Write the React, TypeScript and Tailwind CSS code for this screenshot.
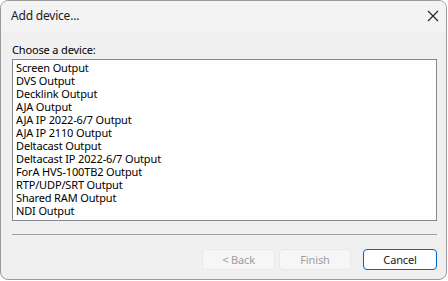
const devices = [
  "Screen Output",
  "DVS Output",
  "Decklink Output",
  "AJA Output",
  "AJA IP 2022-6/7 Output",
  "AJA IP 2110 Output",
  "Deltacast Output",
  "Deltacast IP 2022-6/7 Output",
  "ForA HVS-100TB2 Output",
  "RTP/UDP/SRT Output",
  "Shared RAM Output",
  "NDI Output",
];

export default function App() {
  return (
    <div className="w-[448px] h-[281px] bg-white font-['Noto_Sans',sans-serif] text-[11px] tracking-[-0.15px] text-black">
      <div className="w-[447px] h-[280px] rounded-[8px] border border-[#9a9a9a] bg-[#f0f0f0] overflow-hidden flex flex-col">
        {/* title bar */}
        <div className="h-[30px] bg-[#f3f3f3] flex items-center justify-between pl-[10px] pr-[7px]">
          <span className="text-[#1a1a1a] text-[12px] tracking-[-0.2px]">Add device...</span>
          <svg width="12" height="12" viewBox="0 0 12 12">
            <path d="M1 1 L11 11 M11 1 L1 11" stroke="#222" strokeWidth="1.1" />
          </svg>
        </div>

        <div className="flex-1 flex flex-col pl-[11px] pr-[9px]">
          <div className="mt-[11px] h-[16px] leading-[16px]">Choose a device:</div>
          <div className="mt-[1px] h-[162px] border border-[#828790] bg-white pt-[1px] pl-[3px]">
            {devices.map((d) => (
              <div key={d} className="h-[13px] leading-[13px] whitespace-nowrap">
                {d}
              </div>
            ))}
          </div>

          <div className="mt-[13px] border-t border-[#a0a0a0] h-[1px]" />

          <div className="mt-[14px] flex justify-end">
            <button className="w-[73px] h-[21px] rounded-[4px] border border-[#e8e8e8] bg-[#f6f6f6] text-[#9d9d9d] leading-none">
              &lt; Back
            </button>
            <button className="ml-[4px] w-[72px] h-[21px] rounded-[4px] border border-[#e8e8e8] bg-[#f6f6f6] text-[#9d9d9d] leading-none">
              Finish
            </button>
            <button className="ml-[12px] w-[74px] h-[21px] rounded-[4px] border border-[#0067c0] bg-white text-[#1a1a1a] leading-none">
              Cancel
            </button>
          </div>
        </div>
      </div>
    </div>
  );
}
